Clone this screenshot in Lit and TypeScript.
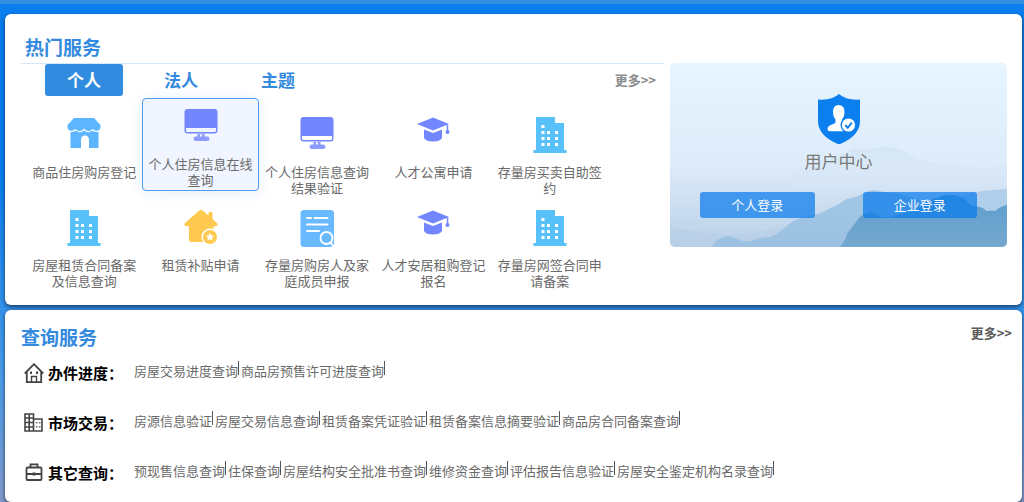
import { LitElement, html, css, svg } from "lit";
import { customElement, property, state } from "lit/decorators.js";
import { classMap } from "lit/directives/class-map.js";

type IconName = "shop" | "monitor" | "cap" | "building" | "house" | "document";

interface Service {
  label: string;
  icon: IconName;
}

interface QueryGroup {
  title: string;
  icon: "home" | "market" | "case";
  links: string[];
}

const TABS = ["个人", "法人", "主题"];

const SERVICES: Service[] = [
  { label: "商品住房购房登记", icon: "shop" },
  { label: "个人住房信息在线查询", icon: "monitor" },
  { label: "个人住房信息查询结果验证", icon: "monitor" },
  { label: "人才公寓申请", icon: "cap" },
  { label: "存量房买卖自助签约", icon: "building" },
  { label: "房屋租赁合同备案及信息查询", icon: "building" },
  { label: "租赁补贴申请", icon: "house" },
  { label: "存量房购房人及家庭成员申报", icon: "document" },
  { label: "人才安居租购登记报名", icon: "cap" },
  { label: "存量房网签合同申请备案", icon: "building" },
];

const GROUPS: QueryGroup[] = [
  { title: "办件进度：", icon: "home", links: ["房屋交易进度查询", "商品房预售许可进度查询"] },
  {
    title: "市场交易：",
    icon: "market",
    links: ["房源信息验证", "房屋交易信息查询", "租赁备案凭证验证", "租赁备案信息摘要验证", "商品房合同备案查询"],
  },
  {
    title: "其它查询：",
    icon: "case",
    links: ["预现售信息查询", "住保查询", "房屋结构安全批准书查询", "维修资金查询", "评估报告信息验证", "房屋安全鉴定机构名录查询"],
  },
];

const SERVICE_ART = {
  shop: svg`
    <path fill="#5db5ff" d="M7 1h20l6.500 7v2.500a4 4 0 0 1-3 3.200q-2.600.6-4.800-1.700q-1.600 2-4.200 2t-4.500-2.500q-1.900 2.500-4.500 2.500t-4.200-2q-2.200 2.300-4.800 1.700a4 4 0 0 1-3-3.200v-2.500z"/>
    <path fill="#5db5ff" d="M3.500 15q3 .5 5-1.300q4.500 3 8.500-.2q4 3.200 8.500.2q2 1.800 6 1.300v15.500a.5.500 0 0 1-.5.500h-9v-8q0-4.500-4-4.500t-4 4.500v8h-10a.5.500 0 0 1-.5-.5z"/>`,
  monitor: svg`
    <path fill="#7286ff" fill-rule="evenodd" d="M3.500 0h27a3 3 0 0 1 3 3v18.500a3 3 0 0 1-3 3h-27a3 3 0 0 1-3-3V3a3 3 0 0 1 3-3zM2 19v2.500A1.500 1.500 0 0 0 3.500 23h27a1.500 1.500 0 0 0 1.500-1.500V19z"/>
    <path fill="#8b9bff" d="M13.500 25h7v2.500h2.500q2.500 0 2.500 2.200t-2.500 2.300H12q-2.500 0-2.500-2.300t2.500-2.200h1.500z"/>
    <path fill="#fff" d="M16 25.500h2v2h-2z"/>`,
  cap: svg`
    <path fill="#7286ff" d="M17 .5 33 7 17 13.500 1 7z"/>
    <path fill="#7286ff" d="M8 12.500 17 16l9-3.500V21q-2 3.500-9 3.500T8 21z"/>
    <path fill="none" stroke="#7286ff" stroke-width="1.500" d="M31.500 7.500V14"/>
    <circle cx="31.500" cy="15" r="2" fill="#7286ff"/>`,
  building: svg`
    <path fill="#58c1f9" d="M3 0h19v6h9v27h2.500v3H.5v-3H3z"/>
    <path fill="#fff" d="M8.500 8h3v3h-3zM8.500 14h3v3h-3zM14 14h3v3h-3zM22 14h3v3h-3zM8.500 20h3v3h-3zM14 20h3v3h-3zM22 20h3v3h-3zM8.500 26h3v3h-3zM14 26h3v3h-3zM22 26h3v3h-3z"/>`,
  house: svg`
    <path fill="#ffc94f" d="M15 .8q2-1.500 4 0l5.500 4.700V3q0-1 1-1h2q1 0 1 1v6l4.500 4q1.500 2-.5 3l-3 .5V24H26l-6 8H7q-2 0-2-2V16.500L1.500 16q-2-1-.5-3z"/>
    <circle cx="26" cy="27" r="8.500" fill="#fff"/>
    <circle cx="26" cy="27" r="7" fill="#ffc94f"/>
    <path fill="#fff" d="m26 22.800 1.300 2.600 2.900.4-2.100 2 .5 2.900-2.600-1.400-2.600 1.400.5-2.900-2.100-2 2.900-.4z"/>`,
  document: svg`
    <rect x=".5" width="33.500" height="37" rx="3.500" fill="#68b9ff"/>
    <path fill="none" stroke="#fff" stroke-width="2" stroke-linecap="round" d="M7 8h4M14.500 8h13M7 14.500h20.500M7 21h12"/>
    <circle cx="26.500" cy="28" r="6" fill="#68b9ff" stroke="#fff" stroke-width="1.800"/>
    <path stroke="#fff" stroke-width="1.800" d="m30.500 32.500 3 4"/>`,
};

const GROUP_ART = {
  home: svg`
    <g fill="none" stroke="#444" stroke-width="1.400">
      <path d="M.8 10.500 10 1.200l9.200 9.300M2.800 9v10.200h14.400V9" stroke-width="1.800"/>
      <path d="M7.500 19v-5.500h5V19"/>
    </g>
    <path fill="#444" d="M6 8.500h2v2.500H6zM12 8.500h2v2.500h-2z"/>`,
  market: svg`
    <g fill="none" stroke="#444" stroke-width="1.600">
      <path d="M1 1h8.500v17H1zM9.500 6H18v12H9.500M1 5h8.500M1 9.500h8.500M1 14h8.500M5.200 1v17"/>
    </g>
    <path fill="#666" d="M12 9h1.500v1.500H12zM15 9h1.500v1.500H15zM12 13h1.500v1.500H12zM15 13h1.500v1.500H15z"/>`,
  case: svg`
    <g fill="none" stroke="#444" stroke-width="1.800">
      <rect x="2.500" y="4.500" width="15" height="12.500" rx="1"/>
      <path d="M6.500 4.500V1.300h7v3.200M2.500 11h15" />
    </g>
    <path fill="#444" d="M8.500 9.500h3v3h-3z"/>`,
};

@customElement("service-tile")
class ServiceTile extends LitElement {
  static styles = css`
    :host {
      display: block;
    }
    .tile {
      display: flex;
      flex-direction: column;
      align-items: center;
      gap: 11px;
      box-sizing: border-box;
      height: 93px;
      padding: 10px 5px 0;
      border: 1px solid transparent;
      border-radius: 4px;
      color: #6a6a6a;
      font-size: 13px;
      line-height: 16px;
      text-align: center;
      text-decoration: none;
    }
    .tile.raised {
      background: #f0f5ff;
      border-color: #4d9fee;
      box-shadow: 0 2px 14px rgba(80, 130, 220, 0.14);
      transform: translateY(-8px);
    }
    .art {
      flex: none;
      width: 34px;
      height: 36px;
      overflow: visible;
    }
    .name {
      max-width: 104px;
    }
  `;

  @property() label = "";
  @property() icon: IconName = "shop";
  @property({ type: Boolean }) raised = false;

  render() {
    return html`<a class=${classMap({ tile: true, raised: this.raised })} href="#">
      <svg class="art" viewBox="0 0 34 36" aria-hidden="true">${SERVICE_ART[this.icon]}</svg>
      <span class="name">${this.label}</span>
    </a>`;
  }
}

@customElement("user-center")
class UserCenter extends LitElement {
  static styles = css`
    :host {
      display: block;
    }
    .card {
      position: relative;
      display: flex;
      flex-direction: column;
      align-items: center;
      padding: 31px 30px 29px;
      border-radius: 5px;
      overflow: hidden;
      background: linear-gradient(#e6f5ff, #deebf9 55%, #b9d0e8);
    }
    .scene {
      position: absolute;
      inset: 0;
      width: 100%;
      height: 100%;
    }
    .shield,
    .title,
    .actions {
      position: relative;
    }
    .shield {
      width: 42px;
      height: 50px;
    }
    .title {
      margin: 5px 0 19px;
      color: #7a7a7a;
      font-size: 17px;
      font-weight: 400;
      line-height: 24px;
    }
    .actions {
      display: grid;
      grid-template-columns: 1fr 1fr;
      gap: 48px;
      align-self: stretch;
    }
    .login {
      height: 26px;
      padding: 0;
      border: 0;
      border-radius: 3px;
      background: rgba(10, 124, 235, 0.72);
      color: #fff;
      font: inherit;
      font-size: 13px;
      line-height: 26px;
    }
  `;

  render() {
    return html`<section class="card">
      <svg class="scene" viewBox="0 0 338 184" preserveAspectRatio="none" aria-hidden="true">
        <defs>
          <linearGradient id="far" x1="0" y1="0" x2="0" y2="1">
            <stop offset="0" stop-color="#cde2f4" stop-opacity=".65" />
            <stop offset="1" stop-color="#dceafa" stop-opacity="0" />
          </linearGradient>
          <linearGradient id="mid" x1="0" y1="0" x2="0" y2="1">
            <stop offset="0" stop-color="#a3c7e6" />
            <stop offset="1" stop-color="#9cc0df" />
          </linearGradient>
          <linearGradient id="near" x1="0" y1="0" x2="0" y2="1">
            <stop offset="0" stop-color="#5c9dcd" />
            <stop offset="1" stop-color="#76a8cf" />
          </linearGradient>
        </defs>
        <path fill="url(#far)" d="M120 112Q150 98 187 85q8 3 14 1 20-5 35 3 10 6 18 9 30 3 62 8l22-4v30H120z" />
        <path fill="#b6cee6" opacity=".5" d="M0 163q20 6 44 8 35 2 60-6l40-8v27H0z" />
        <path fill="#a9cbe8" opacity=".8" d="M270 138l20-4 22-6 26-2v30h-68z" />
        <path fill="url(#mid)" d="M42 184q4-8 12-10 6-2 13 2 8 3 14 2 12-4 20-4 8-4 14-9 8-9 20-11 14-2 24-8 10-4 18-10 10-2 16-5 7-4 12-4l14 3q14 1 22 4l20 6 77 12v32z" />
        <path fill="url(#near)" d="M170 184q6-6 8-14l8-10q5-9 15-11 6 3 12 5 8 1 15-2l15-4q9-3 15-10 7-3 10-3 8-4 18-3l10 4 6 7q12 0 15 5 6-1 9 0 6-5 12-6v42z" />
      </svg>
      <svg class="shield" viewBox="0 0 42 50" aria-hidden="true">
        <path fill="#0b7fee" d="M21 0q7 6.500 21 5.500V27q0 15-21 23.500Q0 42 0 27V5.500Q14 6.500 21 0z" />
        <path fill="#fff" d="M20.500 11q6 0 6 7 0 5-2.500 7.500v3q0 2 3 3v5.800H12q-2.500 0-2.500-2 0-3.300 4-4.500l3-1.300q1-.6 1-2v-2Q15 23 15 18q0-7 5.500-7z" />
        <circle cx="30.500" cy="31" r="8" fill="#0b7fee" />
        <circle cx="30.500" cy="31" r="6.600" fill="#fff" />
        <path fill="none" stroke="#0b7fee" stroke-width="1.900" d="m27.300 31 2.500 2.800 4-5.300" />
      </svg>
      <h2 class="title">用户中心</h2>
      <div class="actions">
        <button class="login" type="button">个人登录</button>
        <button class="login" type="button">企业登录</button>
      </div>
    </section>`;
  }
}

@customElement("app-root")
class AppRoot extends LitElement {
  static styles = css`
    :host {
      display: block;
      min-height: 100vh;
      box-sizing: border-box;
      font-family: "Noto Sans CJK SC", sans-serif;
      background: linear-gradient(#0a7eef, #0a7eef 35%, #4a9cea 75%, #8199cc);
    }
    .strip {
      height: 4px;
      background: #338fe0;
    }
    .page {
      display: flex;
      flex-direction: column;
      gap: 5px;
      padding: 10px 2px 0 5px;
    }
    .panel {
      border-radius: 6px;
      background: #fff;
      box-shadow: 0 2px 4px rgba(0, 0, 0, 0.6);
    }
    .heading {
      margin: 0;
      color: #338adf;
      font-size: 19px;
      font-weight: 700;
      line-height: 28px;
    }
    .hot {
      padding: 19px 15px 13px 16px;
    }
    .hot .heading {
      padding: 0 4px 2px;
    }
    .columns {
      display: grid;
      grid-template-columns: 643fr 337fr;
      gap: 6px;
      align-items: start;
    }
    .services {
      border-top: 1px solid #d5e8fa;
    }
    .bar {
      display: flex;
      align-items: center;
      justify-content: space-between;
      padding: 0 8px 0 24px;
    }
    .tabs {
      display: flex;
      gap: 19px;
    }
    .tab {
      width: 78px;
      height: 32px;
      padding: 0;
      border: 0;
      border-radius: 3px;
      background: none;
      color: #338adf;
      font: inherit;
      font-size: 17px;
      font-weight: 700;
      line-height: 32px;
    }
    .tab.active {
      background: #318ce0;
      color: #fff;
    }
    .more {
      color: #8c8c8c;
      font-size: 13px;
      font-weight: 700;
      line-height: 20px;
      text-decoration: none;
    }
    .tiles {
      display: grid;
      grid-template-columns: repeat(5, 1fr);
      padding: 10px 56px 0 5px;
    }
    .query {
      padding: 13px 10px 4px 16px;
    }
    .top {
      display: flex;
      align-items: flex-start;
      justify-content: space-between;
      height: 25px;
    }
    .query .more {
      color: #5c5c5c;
    }
    .group {
      display: grid;
      grid-template-columns: 24px 86px 1fr;
      align-items: center;
      padding-left: 3px;
      min-height: 50px;
    }
    .glyph {
      width: 20px;
      height: 20px;
    }
    .label {
      margin: 0;
      font-size: 15px;
      font-weight: 700;
      line-height: 24px;
      color: #000;
      white-space: nowrap;
    }
    .links {
      display: flex;
      flex-wrap: wrap;
      gap: 2px;
      margin: 0;
      padding: 0 0 4px;
      list-style: none;
    }
    .link {
      display: block;
      color: #6a6a6a;
      font-size: 13px;
      line-height: 20px;
      text-decoration: none;
    }
    .entry {
      display: flex;
      align-items: flex-start;
    }
    .rule {
      width: 1px;
      height: 14px;
      background: #555;
    }
  `;

  @state() private tab = 0;

  render() {
    return html`
      <div class="strip"></div>
      <main class="page">
        <section class="panel hot">
          <h1 class="heading">热门服务</h1>
          <div class="columns">
            <div class="services">
              <div class="bar">
                <div class="tabs">
                  ${TABS.map(
                    (name, i) => html`<button
                      class=${classMap({ tab: true, active: i === this.tab })}
                      type="button"
                      aria-pressed=${i === this.tab}
                      @click=${() => (this.tab = i)}
                    >${name}</button>`
                  )}
                </div>
                <a class="more" href="#">更多&gt;&gt;</a>
              </div>
              <div class="tiles">
                ${SERVICES.map(
                  (s, i) => html`<service-tile .label=${s.label} .icon=${s.icon} .raised=${i === 1}></service-tile>`
                )}
              </div>
            </div>
            <user-center></user-center>
          </div>
        </section>
        <section class="panel query">
          <div class="top">
            <h1 class="heading">查询服务</h1>
            <a class="more" href="#">更多&gt;&gt;</a>
          </div>
          ${GROUPS.map(
            (g) => html`<div class="group">
              <svg class="glyph" viewBox="0 0 20 20" aria-hidden="true">${GROUP_ART[g.icon]}</svg>
              <h2 class="label">${g.title}</h2>
              <ul class="links">
                ${g.links.map(
                  (text) => html`<li class="entry"><a class="link" href="#">${text}</a><span class="rule"></span></li>`
                )}
              </ul>
            </div>`
          )}
        </section>
      </main>
    `;
  }
}
